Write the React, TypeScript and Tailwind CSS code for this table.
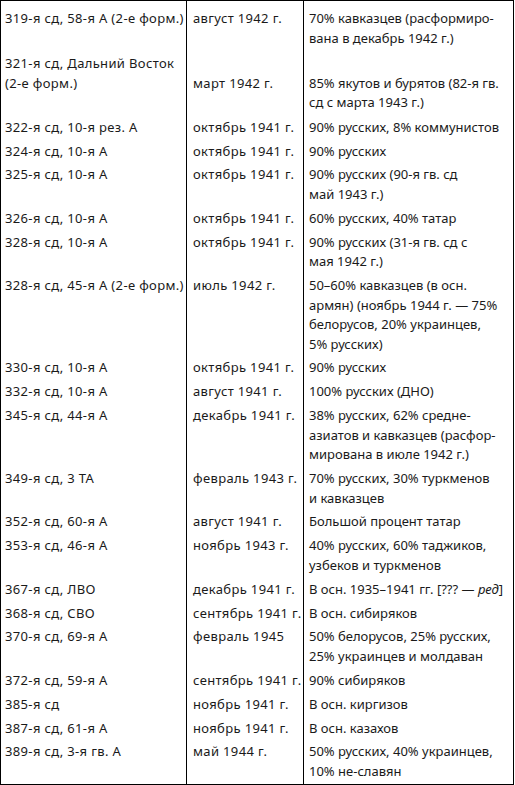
type Row = {
  unit: string[];
  date: string[];
  note: React.ReactNode[];
};

const rows: Row[] = [
  { unit: ["319-я сд, 58-я А (2-е форм.)"], date: ["август 1942 г."], note: ["70% кавказцев (расформиро-", "вана в декабрь 1942 г.)"] },
  { unit: ["321-я сд, Дальний Восток", "(2-е форм.)"], date: ["\u00a0", "март 1942 г."], note: ["\u00a0", "85% якутов и бурятов (82-я гв.", "сд с марта 1943 г.)"] },
  { unit: ["322-я сд, 10-я рез. А"], date: ["октябрь 1941 г."], note: ["90% русских, 8% коммунистов"] },
  { unit: ["324-я сд, 10-я А"], date: ["октябрь 1941 г."], note: ["90% русских"] },
  { unit: ["325-я сд, 10-я А"], date: ["октябрь 1941 г."], note: ["90% русских (90-я гв. сд", "май 1943 г.)"] },
  { unit: ["326-я сд, 10-я А"], date: ["октябрь 1941 г."], note: ["60% русских, 40% татар"] },
  { unit: ["328-я сд, 10-я А"], date: ["октябрь 1941 г."], note: ["90% русских (31-я гв. сд с", "мая 1942 г.)"] },
  {
    unit: ["328-я сд, 45-я А (2-е форм.)"],
    date: ["июль 1942 г."],
    note: ["50–60% кавказцев (в осн.", "армян) (ноябрь 1944 г. — 75%", "белорусов, 20% украинцев,", "5% русских)"],
  },
  { unit: ["330-я сд, 10-я А"], date: ["октябрь 1941 г."], note: ["90% русских"] },
  { unit: ["332-я сд, 10-я А"], date: ["август 1941 г."], note: ["100% русских (ДНО)"] },
  {
    unit: ["345-я сд, 44-я А"],
    date: ["декабрь 1941 г."],
    note: ["38% русских, 62% средне-", "азиатов и кавказцев (расфор-", "мирована в июле 1942 г.)"],
  },
  { unit: ["349-я сд, 3 ТА"], date: ["февраль 1943 г."], note: ["70% русских, 30% туркменов", "и кавказцев"] },
  { unit: ["352-я сд, 60-я А"], date: ["август 1941 г."], note: ["Большой процент татар"] },
  { unit: ["353-я сд, 46-я А"], date: ["ноябрь 1943 г."], note: ["40% русских, 60% таджиков,", "узбеков и туркменов"] },
  {
    unit: ["367-я сд, ЛВО"],
    date: ["декабрь 1941 г."],
    note: [
      <>
        В осн. 1935–1941 гг. [??? — <i>ред</i>]
      </>,
    ],
  },
  { unit: ["368-я сд, СВО"], date: ["сентябрь 1941 г."], note: ["В осн. сибиряков"] },
  { unit: ["370-я сд, 69-я А"], date: ["февраль 1945"], note: ["50% белорусов, 25% русских,", "25% украинцев и молдаван"] },
  { unit: ["372-я сд, 59-я А"], date: ["сентябрь 1941 г."], note: ["90% сибиряков"] },
  { unit: ["385-я сд"], date: ["ноябрь 1941 г."], note: ["В осн. киргизов"] },
  { unit: ["387-я сд, 61-я А"], date: ["ноябрь 1941 г."], note: ["В осн. казахов"] },
  { unit: ["389-я сд, 3-я гв. А"], date: ["май 1944 г."], note: ["50% русских, 40% украинцев,", "10% не-славян"] },
];

function Lines({ lines }: { lines: React.ReactNode[] }) {
  return (
    <>
      {lines.map((l, i) => (
        <div key={i} className="whitespace-nowrap">
          {l}
        </div>
      ))}
    </>
  );
}

export default function App() {
  return (
    <div className="min-h-[785px] bg-white">
      <div
        className="w-[514px] border border-black text-[13px] leading-[19.5px] text-[#1a1a1a]"
        style={{ fontFamily: '"Noto Sans", "DejaVu Sans", sans-serif' }}
      >
        {rows.map((r, i) => {
          const pad =
            i === 0
              ? "pt-[8px] pb-[3px]"
              : i === 1
                ? "pt-[3px] pb-[3px]"
                : i === rows.length - 1
                  ? "pt-[2.2px] pb-[3px]"
                  : "py-[2.2px]";
          return (
            <div key={i} className="grid grid-cols-[185px_117px_1fr]">
              <div className={`pl-[4px] tracking-[0.35px] ${pad}`}>
                <Lines lines={r.unit} />
              </div>
              <div className={`border-l border-black pl-[6px] tracking-[0.35px] ${pad}`}>
                <Lines lines={r.date} />
              </div>
              <div className={`border-l border-black pl-[5px] ${pad}`}>
                <Lines lines={r.note} />
              </div>
            </div>
          );
        })}
      </div>
    </div>
  );
}
